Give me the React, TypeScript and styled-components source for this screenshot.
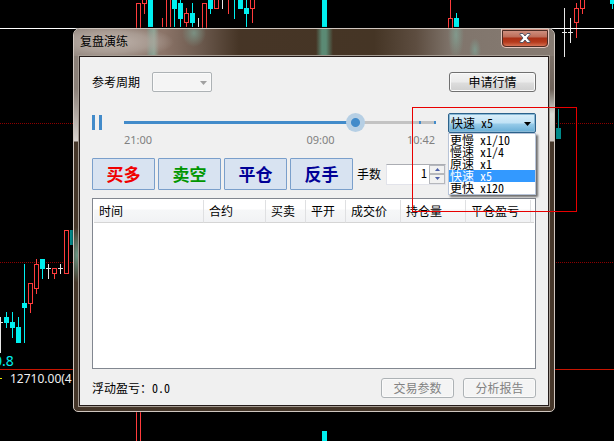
import React, { useState } from "react";
import styled, { createGlobalStyle } from "styled-components";

const cjk = `"Noto Sans Mono CJK SC", "Noto Sans CJK SC", sans-serif`;
const numeric = `"Noto Sans", "Noto Sans CJK SC", sans-serif`;

const GlobalStyle = createGlobalStyle`
  * { box-sizing: border-box; }
  body { margin: 0; background: #000; font: 12px/16px ${cjk}; color: #000; }
  button, input, select { font: inherit; color: inherit; margin: 0; }
`;

const Desktop = styled.main`
  position: relative;
  display: flex;
  min-height: 100vh;
  padding: 28px 59px 29px 73px;
  overflow: hidden;
  background: #000;
`;

const ChartLayer = styled.svg`
  position: absolute;
  inset: 0;
  width: 100%;
  height: 100%;
  font-family: ${numeric};
  font-size: 12px;
`;

const Dialog = styled.section`
  position: relative;
  flex: 1;
  display: flex;
  flex-direction: column;
  min-width: 0;
  padding: 0 5px 5px;
  border: 1px solid #cfc6bf;
  border-radius: 7px 7px 5px 5px;
  box-shadow: 0 0 2px #000;
  background:
    radial-gradient(ellipse 7px 28px at 3px 226px, #6b9987 0%, transparent 100%),
    linear-gradient(#8a7f77 0, #8a7f77 60px, #d8d2ce 112px, transparent 113px) left top / 6px 113px no-repeat,
    linear-gradient(#8a7f77 0, #6d6158 60px, #d8dcd6 85px, #cfc8c2 112px, transparent 113px) right top / 6px 113px no-repeat,
    #453629;
`;

const TitleBar = styled.header`
  display: flex;
  justify-content: space-between;
  height: 27px;
  margin: 0 -5px;
  padding: 0 5px;
  border-radius: 6px 6px 0 0;
  background:
    radial-gradient(ellipse 62px 17px at 38px 13px, #c9bfb8cc 0%, #b5aaa2aa 60%, transparent 100%),
    linear-gradient(90deg, transparent 72px, #79a79799 76px, #8db9a8aa 80px, transparent 85px),
    radial-gradient(ellipse 12px 14px at 120px 4px, #7d9c8ecc, transparent),
    linear-gradient(90deg, transparent 242px, #5b8a74 248px, #5b8a74 252px, transparent 259px),
    radial-gradient(ellipse 8px 24px at 382px 6px, #82a294cc, transparent),
    radial-gradient(ellipse 6px 12px at 401px 21px, #7f9f92cc, transparent),
    linear-gradient(90deg, #968a82 0, #8b7468 90px, #6a584c 128px, #463526 165px, #453525 300px, #5d4d40 342px, #80756c 378px, #867b72 100%);
`;

const Title = styled.h1`
  margin: 0;
  padding-left: 1px;
  font: 12px/24px ${cjk};
`;

const CloseButton = styled.button`
  display: flex;
  align-items: center;
  justify-content: center;
  width: 48px;
  height: 19px;
  padding: 0;
  border: 1px solid #e3c5bd;
  border-top: 0;
  border-radius: 0 0 5px 5px;
  outline: 1px solid #4d2c24;
  outline-offset: -2px;
  background: linear-gradient(#d49a8b 0, #bd6c58 8px, #a92f16 9px, #b53a1c 13px, #dd7d5f 100%);
`;

const Client = styled.div`
  flex: 1;
  display: flex;
  flex-direction: column;
  min-width: 0;
  padding: 15px 12px 7px;
  border: 1px solid #241b19;
  outline: 1px solid #a59c93;
  background: #f0f0f0;
`;

const Row = styled.div<{ $gap?: number }>`
  display: flex;
  align-items: center;
  gap: ${(p) => p.$gap ?? 0}px;
`;

const Spacer = styled.span`
  flex: 1;
`;

const Label = styled.label`
  white-space: nowrap;
`;

const SelectFrame = styled.div<{ $width: number }>`
  position: relative;
  display: flex;
  width: ${(p) => p.$width}px;
`;

const Select = styled.select<{ $active?: boolean }>`
  width: 100%;
  height: 20px;
  padding: 0 2px;
  appearance: none;
  line-height: 18px;
  border: 1px solid ${(p) => (p.$active ? "#2c628b" : "#adb2b5")};
  border-radius: 2px;
  background: ${(p) =>
    p.$active
      ? "linear-gradient(#dceffa 0, #c0e2f5 9px, #97cbe9 10px, #68aed6 100%)"
      : "#f4f4f4"};
  box-shadow: inset 0 0 0 1px ${(p) => (p.$active ? "#8ab9d6" : "#fafafa")};
  opacity: 1;
`;

const SelectArrow = styled.svg`
  position: absolute;
  top: 9px;
  right: 5px;
  pointer-events: none;
`;

const PushButton = styled.button<{ $width: number }>`
  width: ${(p) => p.$width}px;
  height: 20px;
  padding: 0;
  line-height: 16px;
  border: 1px solid #707070;
  border-radius: 3px;
  background: linear-gradient(#f3f3f3 0, #ebebeb 9px, #dddddd 10px, #cfcfcf 100%);
  box-shadow: inset 0 0 0 1px #fafafa;
  &:disabled {
    border-color: #adb2b5;
    background: #f4f4f4;
    color: #838383;
  }
`;

const PlaybackRow = styled(Row)`
  align-items: flex-start;
  margin-top: 21px;
`;

const PauseButton = styled.button`
  width: 10px;
  height: 15px;
  margin: 2px 22px 0 0;
  padding: 0;
  border: 0;
  background: linear-gradient(90deg, #428bca 3px, transparent 3px, transparent 7px, #428bca 7px);
`;

const Timeline = styled.div`
  flex: 1;
  min-width: 0;
`;

const Slider = styled.input`
  display: block;
  width: 100%;
  height: 19px;
  appearance: none;
  background:
    linear-gradient(#428bca, #428bca) right 0 center / 2px 3px no-repeat,
    linear-gradient(#428bca, #428bca) right 15px center / 2px 3px no-repeat,
    linear-gradient(#428bca, #428bca) left center / 74% 3px no-repeat,
    linear-gradient(#c3c3c3, #c3c3c3) left center / 100% 3px no-repeat;
  &::-webkit-slider-thumb {
    appearance: none;
    width: 19px;
    height: 19px;
    border-radius: 50%;
    background: radial-gradient(circle, #428bca 4px, #b6cfe4 5px);
  }
`;

const Times = styled.div`
  display: grid;
  grid-template-columns: 1fr auto 1fr;
  padding-right: 1px;
  font: 11px/16px ${numeric};
  color: #808080;
`;

const Time = styled.span<{ $end?: boolean }>`
  text-align: ${(p) => (p.$end ? "right" : "left")};
`;

const MiddleTime = styled(Time)`
  padding-left: 82px;
`;

const SpeedField = styled(SelectFrame)`
  margin-left: 12px;
`;

const Options = styled.ul`
  position: absolute;
  z-index: 2;
  top: 20px;
  left: 0;
  width: 100%;
  margin: 0;
  padding: 0;
  list-style: none;
  border: 1px solid #b8c4d8;
  background: #fff;
  box-shadow: 2px 2px 2px #0000008c;
`;

const Option = styled.li<{ $selected: boolean }>`
  height: 12px;
  padding-left: 1px;
  line-height: 12px;
  white-space: nowrap;
  background: ${(p) => (p.$selected ? "#3399ff" : "transparent")};
  color: ${(p) => (p.$selected ? "#fff" : "#000")};
`;

const OrderRow = styled(Row)`
  margin-top: 10px;
`;

const OrderButton = styled.button<{ $color: string }>`
  width: 63px;
  height: 32px;
  padding: 0;
  font: bold 17px/28px ${cjk};
  color: ${(p) => p.$color};
  border: 1px solid #7a9fcb;
  border-radius: 1px;
  background: #d8e3f1;
`;

const LotsLabel = styled(Label)`
  margin: 0 2px 0 1px;
`;

const SpinBox = styled.div`
  display: flex;
  width: 60px;
  height: 21px;
  border: 1px solid #e2e3ea;
  border-top-color: #abadb3;
  background: #fff;
`;

const SpinInput = styled.input`
  flex: 1;
  min-width: 0;
  padding: 0 2px 2px;
  border: 0;
  background: transparent;
  text-align: right;
`;

const SpinButtons = styled.div`
  display: grid;
  grid-template-rows: 1fr 1fr;
  width: 16px;
`;

const SpinButton = styled.button`
  display: flex;
  align-items: center;
  justify-content: center;
  padding: 0;
  border: 1px solid #b5b7bc;
  background: #f1f1f1;
`;

const TableFrame = styled.div`
  flex: 1;
  margin-top: 8px;
  padding: 1px 1px 0;
  border: 1px solid #828790;
  background: #fff;
`;

const Table = styled.table`
  width: 100%;
  table-layout: fixed;
  border-collapse: separate;
  border-spacing: 0;
`;

const HeaderCell = styled.th`
  height: 23px;
  padding: 0 0 0 5px;
  font-weight: normal;
  text-align: left;
  white-space: nowrap;
  border-right: 1px solid #dfe0e2;
  border-bottom: 1px solid #d5d5d5;
  background: linear-gradient(#fff 0, #fff 9px, #f6f7f8 10px, #f1f2f4 100%);
  &:last-child { border-right: 0; }
`;

const Footer = styled(Row)`
  margin-top: 9px;
`;

const HighlightBox = styled.div`
  position: absolute;
  z-index: 3;
  top: 107px;
  left: 412px;
  width: 165px;
  height: 105px;
  border: 1px solid #e80000;
  pointer-events: none;
`;

const RED = "#ff3c3c";
const CYAN = "#00f0f0";
const WHITE = "#e8e8e8";

type Bar = { x: number; open: number; close: number; low: number; high: number; kind: "up" | "down" | "flat" };

const bar = (kind: Bar["kind"], x: number, open: number, close: number, low = open, high = close): Bar => ({ kind, x, open, close, low, high });

const bars: Bar[] = [
  bar("up", 136, 3, 30), bar("up", 142, -3, 4, -3, 14), bar("down", 148, -1, 27),
  bar("down", 172, 0, 9, 0, 27), bar("down", 178, 3, 19, 0, 27), bar("up", 184, 13, 23, 8, 27),
  bar("down", 190, 13, 23, 3, 27), bar("up", 202, 3, 30), bar("down", 208, 0, 9, 0, 14),
  bar("up", 214, -3, 9), bar("down", 238, 0, 9), bar("down", 244, 8, 14, 0, 27),
  bar("up", 250, -3, 9, -3, 23), bar("down", 322, 0, 27), bar("up", 448, 18, 30, 0, 30),
  bar("down", 454, 18, 27, 13, 27), bar("flat", 562, 32, 33, 8, 57), bar("flat", 568, 32, 33, 18, 43),
  bar("up", 574, 8, 23, 3, 38), bar("up", 580, -3, 9, -3, 14), bar("down", 610, 0, 4, 0, 9),
  bar("flat", -2, 322, 323, 317, 353), bar("down", 4, 317, 323, 312, 328), bar("down", 10, 322, 328, 312, 338),
  bar("down", 16, 327, 343, 317, 343), bar("down", 22, 303, 308, 264, 343), bar("up", 28, 283, 304, 283, 313),
  bar("up", 34, 264, 289, 259, 294), bar("down", 40, 259, 269, 259, 279), bar("flat", 46, 268, 269, 264, 279),
  bar("up", 52, 268, 274, 268, 279), bar("flat", 58, 268, 269, 264, 274), bar("up", 64, 230, 274),
];

const Candle = ({ kind, x, open, close, low, high }: Bar) => {
  const color = kind === "up" ? RED : kind === "down" ? CYAN : WHITE;
  return (
    <g>
      <rect x={x + 2} y={low} width={1} height={high - low} fill={color} />
      {kind === "up" ? (
        <rect x={x + 0.5} y={open + 0.5} width={4} height={close - open - 1} fill="#000" stroke={color} />
      ) : (
        <rect x={x} y={open} width={5} height={close - open} fill={color} />
      )}
    </g>
  );
};

const Chart = () => (
  <ChartLayer aria-hidden="true" shapeRendering="crispEdges">
    <path d="M0 123.5H614M0 262.5H614" stroke="#8c0000" strokeDasharray="1 1" />
    {bars.map((b) => <Candle key={`${b.x}-${b.open}`} {...b} />)}
    <path d="M162.5 18V27M166.5 0V27M170.5 0V27M228.5 0V14" stroke={RED} />
    <path d="M198.5 18V27M222.5 0V9" stroke={WHITE} />
    <path d="M234.5 0V19" stroke={CYAN} />
    <path d="M0 28.5H614" stroke="#fff" />
    <path d="M558.5 109V128" stroke="#008a8a" />
    <path d="M556 128h5v11h-5zM70 230h3v15h-3z" fill="#008a8a" />
    <path d="M0 369.5H614" stroke="#c81400" />
    <path d="M136.5 412V441M140.5 412V441" stroke={RED} />
    <path d="M322 431h5v10h-5z" fill={CYAN} />
    <path d="M0 378.5h2" stroke="#e8e800" />
    <text x="-6" y="366" fill={CYAN} fontSize="14">0.8</text>
    <text x="10" y="383" fill="#f0f0f0">12710.00(4</text>
  </ChartLayer>
);

const speeds = ["更慢 x1/10", "慢速 x1/4", "原速 x1", "快速 x5", "更快 x120"];
const orders = [
  { text: "买多", color: "#f00000" },
  { text: "卖空", color: "#009600" },
  { text: "平仓", color: "#000096" },
  { text: "反手", color: "#000096" },
];
const columns = [
  { text: "时间", width: 110 },
  { text: "合约", width: 62 },
  { text: "买卖", width: 40 },
  { text: "平开", width: 40 },
  { text: "成交价", width: 55 },
  { text: "持仓量", width: 65 },
  { text: "平仓盈亏", width: 65 },
  { text: "", width: 0 },
];

export default function App() {
  const [speed, setSpeed] = useState(speeds[3]);
  return (
    <Desktop>
      <GlobalStyle />
      <Chart />
      <Dialog role="dialog" aria-labelledby="dialog-title">
        <TitleBar>
          <Title id="dialog-title">复盘演练</Title>
          <CloseButton aria-label="关闭">
            <svg width="12" height="10" viewBox="0 0 12 10">
              <path d="M1 .5h3L6 3 8 .5h3v1L8 5l3 3.500v1H8L6 7 4 9.500H1v-1L4 5 1 1.500z" fill="#fff" stroke="#535666" />
            </svg>
          </CloseButton>
        </TitleBar>
        <Client>
          <Row $gap={12}>
            <Label htmlFor="period">参考周期</Label>
            <SelectFrame $width={60}>
              <Select id="period" disabled />
              <SelectArrow width="7" height="4"><path d="M0 0h7L3.500 4z" fill="#a0a0a0" /></SelectArrow>
            </SelectFrame>
            <Spacer />
            <PushButton $width={87}>申请行情</PushButton>
          </Row>
          <PlaybackRow>
            <PauseButton aria-label="暂停" />
            <Timeline>
              <Slider type="range" aria-label="回放进度" min={0} max={1000} defaultValue={758} />
              <Times><Time>21:00</Time><MiddleTime>09:00</MiddleTime><Time $end>10:42</Time></Times>
            </Timeline>
            <SpeedField $width={88}>
              <Select $active aria-label="回放速度" value={speed} onChange={(e) => setSpeed(e.target.value)}>
                {speeds.map((s) => <option key={s}>{s}</option>)}
              </Select>
              <SelectArrow width="7" height="4"><path d="M0 0h7L3.500 4z" /></SelectArrow>
              <Options role="listbox" aria-label="回放速度">
                {speeds.map((s) => (
                  <Option key={s} role="option" aria-selected={s === speed} $selected={s === speed} onClick={() => setSpeed(s)}>{s}</Option>
                ))}
              </Options>
            </SpeedField>
          </PlaybackRow>
          <OrderRow $gap={3}>
            {orders.map((o) => <OrderButton key={o.text} $color={o.color}>{o.text}</OrderButton>)}
            <LotsLabel htmlFor="lots">手数</LotsLabel>
            <SpinBox>
              <SpinInput id="lots" defaultValue="1" />
              <SpinButtons>
                <SpinButton aria-label="增加"><svg width="5" height="3"><path d="M0 3h5L2.500 0z" fill="#4b5fa8" /></svg></SpinButton>
                <SpinButton aria-label="减少"><svg width="5" height="3"><path d="M0 0h5L2.500 3z" fill="#4b5fa8" /></svg></SpinButton>
              </SpinButtons>
            </SpinBox>
          </OrderRow>
          <TableFrame>
            <Table>
              <colgroup>
                {columns.map((c) => <col key={c.text} width={c.width || undefined} />)}
              </colgroup>
              <thead><tr>{columns.map((c) => <HeaderCell key={c.text} scope="col">{c.text}</HeaderCell>)}</tr></thead>
              <tbody />
            </Table>
          </TableFrame>
          <Footer $gap={9}>
            <span>浮动盈亏：0.0</span>
            <Spacer />
            <PushButton $width={73} disabled>交易参数</PushButton>
            <PushButton $width={73} disabled>分析报告</PushButton>
          </Footer>
        </Client>
      </Dialog>
      <HighlightBox />
    </Desktop>
  );
}
